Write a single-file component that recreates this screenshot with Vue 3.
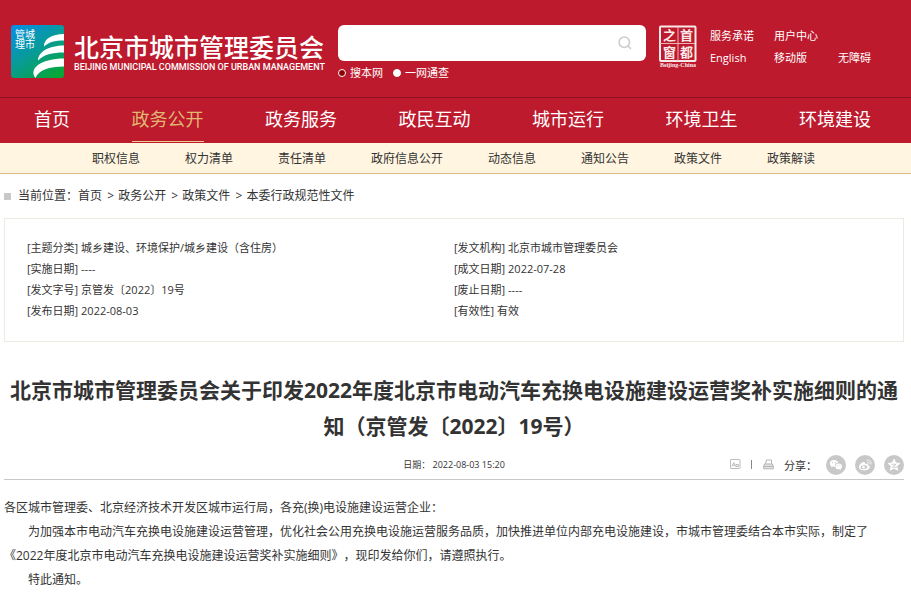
<script setup>
import { ref } from 'vue'

const scope = ref('site')
const keyword = ref('')

const quickLinks = ['服务承诺', '用户中心', '', 'English', '移动版', '无障碍']
const mainNav = ['首页', '政务公开', '政务服务', '政民互动', '城市运行', '环境卫生', '环境建设']
const activeNav = '政务公开'
const subNav = ['职权信息', '权力清单', '责任清单', '政府信息公开', '动态信息', '通知公告', '政策文件', '政策解读']
const crumbs = ['首页', '政务公开', '政策文件', '本委行政规范性文件']
const meta = [
  ['主题分类', '城乡建设、环境保护/城乡建设（含住房）'],
  ['发文机构', '北京市城市管理委员会'],
  ['实施日期', '----'],
  ['成文日期', '2022-07-28'],
  ['发文字号', '京管发〔2022〕19号'],
  ['废止日期', '----'],
  ['发布日期', '2022-08-03'],
  ['有效性', '有效'],
]
</script>

<template>
  <div class="page">
    <header class="header">
      <a class="brand" href="#">
        <svg class="brand-mark" viewBox="0 0 53 53" aria-hidden="true">
          <defs>
            <linearGradient id="markFill" x1="0.1" y1="0" x2="0.8" y2="1">
              <stop offset="0" stop-color="#078fe0" />
              <stop offset="0.5" stop-color="#079b97" />
              <stop offset="1" stop-color="#06a637" />
            </linearGradient>
          </defs>
          <rect width="53" height="53" rx="3" fill="url(#markFill)" />
          <g fill="#fff">
            <path d="M33 21.500C32.500 14 41 9 53 9V15.500C44 15.500 38 17 33 21.500Z" />
            <path d="M27 35.500C27 27 38 20.500 53 20.500V27.500C41 27.500 33 29.500 27 35.500Z" />
            <path d="M24.500 53C17 43 31 33.500 53 33.500V41.500C38 42 28 44.500 24.500 53Z" />
            <text x="4" y="13" font-size="10">管城</text>
            <text x="4" y="23" font-size="10">理市</text>
          </g>
        </svg>
        <span class="brand-text">
          <span class="brand-cn">北京市城市管理委员会</span>
          <span class="brand-en">BEIJING MUNICIPAL COMMISSION OF URBAN MANAGEMENT</span>
        </span>
      </a>

      <form class="search" @submit.prevent>
        <div class="search-box">
          <input v-model="keyword" class="search-input" type="text" aria-label="搜索" />
          <button class="search-button" type="submit" aria-label="搜索">
            <svg viewBox="0 0 14 14" width="14" height="14" fill="none" stroke="#cfcfcf" stroke-width="1.7">
              <circle cx="6.3" cy="6.2" r="5.2" />
              <path d="M10 10L13 12.8" />
            </svg>
          </button>
        </div>
        <div class="scopes">
          <label class="scope"><input v-model="scope" type="radio" name="scope" value="site" />搜本网</label>
          <label class="scope"><input v-model="scope" type="radio" name="scope" value="all" />一网通查</label>
        </div>
      </form>

      <a class="seal" href="#" aria-label="首都之窗">
        <svg viewBox="0 0 40 44" width="40" height="44" fill="#fbe9ea">
          <rect x="2" y="1.5" width="35.500" height="34.500" rx="1" fill="none" stroke="#fbe9ea" stroke-width="2" />
          <path d="M20 2V36M2 18.500H37" stroke="#e9b3b9" stroke-width="1" fill="none" />
          <g font-size="13" font-weight="700">
            <text x="5" y="15">之</text>
            <text x="22" y="15">首</text>
            <text x="5" y="32">窗</text>
            <text x="22" y="32">都</text>
          </g>
          <text class="seal-caption" x="20" y="42" font-size="6" text-anchor="middle">Beijing-China</text>
        </svg>
      </a>

      <nav class="quick">
        <template v-for="(item, i) in quickLinks" :key="i">
          <a v-if="item" href="#">{{ item }}</a>
          <span v-else></span>
        </template>
      </nav>
    </header>

    <nav class="main-nav">
      <a v-for="item in mainNav" :key="item" href="#" :class="{ active: item === activeNav }">{{ item }}</a>
    </nav>
    <nav class="sub-nav">
      <a v-for="item in subNav" :key="item" href="#">{{ item }}</a>
    </nav>

    <main class="content">
      <div class="crumbs">
        <span class="crumb-mark"></span>
        <span>当前位置：<template v-for="(item, i) in crumbs" :key="item"><span v-if="i" class="crumb-sep"> &gt; </span><a href="#">{{ item }}</a></template></span>
      </div>

      <ul class="meta">
        <li v-for="[label, value] in meta" :key="label">[{{ label }}] {{ value }}</li>
      </ul>

      <article>
        <h1 class="title">北京市城市管理委员会关于印发2022年度北京市电动汽车充换电设施建设运营奖补实施细则的通知（京管发〔2022〕19号）</h1>

        <div class="info">
          <span class="date">日期： 2022-08-03 15:20</span>
          <div class="tools">
            <button type="button" aria-label="字号">
              <svg viewBox="0 0 11 11" width="11" height="11" fill="none" stroke="#bdbdbd">
                <rect x="0.500" y="0.500" width="9.500" height="9" rx="0.500" />
                <path d="M2 7.500L3.800 3.500L5.500 7.500M2.600 6.200H5M6 7.500V5.500H8.500V7.500H6" />
              </svg>
            </button>
            <span class="divider"></span>
            <button type="button" aria-label="打印">
              <svg viewBox="0 0 11 11" width="11" height="11" fill="none" stroke="#b5b5b5">
                <path fill="#e4e4e4" d="M1.500 5H9.500L10.300 7V9.800H0.700V7Z" />
                <path d="M2.500 5L3.500 1H8.500V5M1 7.500H10" />
              </svg>
            </button>
            <span class="share-label">分享：</span>
            <button type="button" class="share" aria-label="微信">
              <svg viewBox="0 0 20 20" width="20" height="20">
                <circle cx="10" cy="10" r="10" fill="#c8c8c8" />
                <path fill="#fff" d="M8 5C5.300 5 3.800 6.600 3.800 8.400C3.800 9.500 4.400 10.400 5.300 11L5 12.400L6.600 11.600C7.600 11.900 8.400 11.800 8.700 11.700C8.500 9.300 10.200 7.900 12.200 7.800C11.700 6 10 5 8 5Z" />
                <path fill="#fff" d="M12.600 8.500C10.600 8.500 9.200 9.900 9.200 11.500C9.200 13.300 11 14.700 13.600 14.300L15 15L14.700 13.800C17.300 12 16.100 8.500 12.600 8.500Z" />
                <g fill="#c8c8c8"><circle cx="6.500" cy="7.700" r="0.600" /><circle cx="9.500" cy="7.700" r="0.600" /><circle cx="11.500" cy="10.700" r="0.500" /><circle cx="14" cy="10.700" r="0.500" /></g>
              </svg>
            </button>
            <button type="button" class="share" aria-label="微博">
              <svg viewBox="0 0 20 20" width="20" height="20">
                <circle cx="10" cy="10" r="10" fill="#c8c8c8" />
                <path fill="#fff" d="M8.300 7C6.500 7.500 4 9.900 4 12C4 14.200 6.500 15.400 9.200 15.400C12.400 15.400 14.800 13.700 14.800 12C14.800 10.900 13.900 10.400 13.100 10.200C13.500 9 12.600 8.200 9.900 9.100C10.400 7.600 9.800 6.700 8.300 7Z" />
                <ellipse cx="9" cy="12.200" rx="3.400" ry="2" fill="#c8c8c8" transform="rotate(-8 9 12.200)" />
                <circle cx="8.600" cy="12.300" r="1.300" fill="#fff" />
                <path fill="none" stroke="#fff" stroke-width="0.800" stroke-linecap="round" d="M12 5.200C14.700 4.400 16.800 6.700 15.900 9.200M12.500 7.200C13.700 6.900 14.500 7.700 14.100 8.700" />
              </svg>
            </button>
            <button type="button" class="share" aria-label="QQ空间">
              <svg viewBox="0 0 20 20" width="20" height="20">
                <circle cx="10" cy="10" r="10" fill="#c8c8c8" />
                <path fill="#fff" stroke="#fff" stroke-linejoin="round" d="M10 4.200L11.700 8L15.800 8.400L12.700 11.100L13.600 15.200L10 13L6.400 15.200L7.300 11.100L4.200 8.400L8.300 8Z" />
                <path fill="none" stroke="#c8c8c8" stroke-width="0.900" d="M7.600 9.300H12L8.400 12.200H12.800" />
              </svg>
            </button>
          </div>
        </div>

        <div class="body">
          <p class="flush">各区城市管理委、北京经济技术开发区城市运行局，各充(换)电设施建设运营企业：</p>
          <p>为加强本市电动汽车充换电设施建设运营管理，优化社会公用充换电设施运营服务品质，加快推进单位内部充电设施建设，市城市管理委结合本市实际，制定了《2022年度北京市电动汽车充换电设施建设运营奖补实施细则》，现印发给你们，请遵照执行。</p>
          <p>特此通知。</p>
        </div>
      </article>
    </main>
  </div>
</template>

<style>
body {
  background: #fff;
}
</style>

<style scoped>
.page {
  font-family: "Open Sans", "Noto Sans CJK SC", sans-serif;
  font-size: 12px;
  color: #333;
  text-spacing-trim: space-all;
}

a {
  color: inherit;
  text-decoration: none;
}

button {
  display: flex;
  padding: 0;
  border: 0;
  background: none;
  cursor: pointer;
}

.header {
  display: flex;
  align-items: flex-start;
  padding: 25px 0 16px 11px;
  background: #bd1a2d;
  color: #fff;
}

.brand {
  display: flex;
  flex: 0 0 327px;
  gap: 10px;
}

.brand-mark {
  flex: none;
  width: 53px;
  height: 53px;
}

.brand-text {
  display: flex;
  flex-direction: column;
  padding-top: 6px;
  white-space: nowrap;
}

.brand-cn {
  font-size: 25px;
  font-weight: 500;
  line-height: 32px;
}

.brand-en {
  font-family: "Roboto", sans-serif;
  font-size: 9px;
  font-weight: 500;
  line-height: 9px;
}

.search {
  flex: 1;
  margin-right: 12px;
}

.search-box {
  display: flex;
  align-items: center;
  height: 36px;
  padding-right: 14px;
  border-radius: 6px;
  background: #fff;
}

.search-input {
  flex: 1;
  min-width: 0;
  height: 36px;
  padding: 0 10px;
  box-sizing: border-box;
  border: 0;
  outline: 0;
  background: none;
  font: inherit;
}

.scopes {
  display: flex;
  gap: 10px;
  padding-top: 4px;
  font-size: 11px;
  line-height: 16px;
}

.scope {
  display: flex;
  align-items: center;
  gap: 4px;
}

.scope input {
  appearance: none;
  width: 8px;
  height: 8px;
  margin: 0;
  border: 1px solid #fff;
  border-radius: 50%;
  background: #fff;
}

.scope input:checked {
  background: #8b0000;
}

.seal {
  display: flex;
  flex: none;
  margin-right: 12px;
}

.seal text {
  font-family: "Noto Sans CJK SC", sans-serif;
}

.seal .seal-caption {
  font-family: "Liberation Serif", serif;
  font-weight: 700;
}

.quick {
  display: grid;
  flex: none;
  grid-template-columns: 64px 64px 73px;
  font-size: 11px;
  line-height: 22px;
}

.main-nav {
  display: flex;
  justify-content: space-between;
  padding: 0 40px 1px 34px;
  border-top: 1px solid #8f1220;
  background: #bd1a2d;
  color: #fff;
  font-size: 18px;
  line-height: 43px;
  white-space: nowrap;
}

.main-nav a {
  border-bottom: 1px solid transparent;
}

.main-nav .active {
  border-color: #f0c890;
  color: #e0b872;
}

.sub-nav {
  display: flex;
  gap: 45px;
  padding: 1px 0 0 92px;
  border-bottom: 1px solid #dcba80;
  background: #fff5e0;
  line-height: 29px;
  white-space: nowrap;
}

.content {
  padding: 0 7px 0 4px;
}

.crumbs {
  display: flex;
  align-items: center;
  gap: 7px;
  line-height: 44px;
}

.crumb-mark {
  width: 7px;
  height: 7px;
  background: #c8c8c8;
}

.crumb-sep {
  margin: 0 1px 0 2px;
}

.meta {
  display: grid;
  grid-template-columns: 1fr 1fr;
  margin: 0;
  padding: 18px 22px 20px;
  border: 1px solid #ebebe0;
  list-style: none;
  font-size: 11px;
  line-height: 21px;
}

.title {
  margin: 30px 0 0;
  font-size: 21px;
  font-weight: 700;
  line-height: 36px;
  text-align: center;
}

.info {
  display: grid;
  grid-template-columns: 1fr auto 1fr;
  align-items: center;
  height: 29px;
  padding-top: 6px;
  border-bottom: 1px solid #c8c8c8;
}

.date {
  grid-column: 2;
  font-size: 9px;
}

.tools {
  display: flex;
  align-items: center;
  justify-content: flex-end;
  font-size: 11px;
}

.divider {
  width: 1px;
  height: 9px;
  margin: 0 11px 0 10px;
  background: #888;
}

.share-label {
  margin-left: 10px;
}

.share {
  margin-left: 9px;
}

.body {
  padding-top: 16px;
  line-height: 24px;
}

.body p {
  margin: 0;
  text-indent: 24px;
}

.body .flush {
  text-indent: 0;
}
</style>
